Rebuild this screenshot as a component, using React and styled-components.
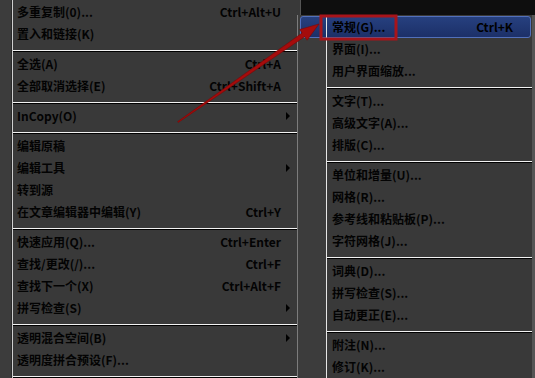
import React from 'react';
import styled, { createGlobalStyle } from 'styled-components';

const Global = createGlobalStyle`
  html, body { margin: 0; padding: 0; background: #0e0e0e; }
  body { font-family: "Noto Sans CJK SC", "Liberation Sans", sans-serif; }
`;

const Page = styled.div`
  position: relative;
  width: 535px;
  height: 378px;
  overflow: hidden;
  background: #0e0e0e;
`;

const MainMenu = styled.div`
  box-sizing: border-box;
  width: 301px;
  height: 378px;
  padding-top: 1px;
  border-right: 1px solid #555;
  background: linear-gradient(
    to right,
    #3c3c3c 0 11px,
    #2a2a2a 11px 12px,
    #cfcfcf 12px 13px,
    #393939 13px
  );
`;

const SubMenu = styled.div`
  position: absolute;
  left: 297px;
  top: 15px;
  box-sizing: border-box;
  width: 238px;
  height: 363px;
  overflow: hidden;
  padding-top: 1px;
  border-left: 1px solid #7c7c7c;
  border-right: 3px solid #555;
  background: linear-gradient(to right, #3c3c3c 0 28px, #393939 28px);

  &::after {
    content: '';
    position: absolute;
    left: 28px;
    top: 0;
    bottom: 0;
    width: 1px;
    background: #e6e6e6;
    z-index: 1;
  }
`;

const Row = styled.div`
  box-sizing: border-box;
  display: flex;
  align-items: center;
  height: 22px;
  padding-left: ${p => p.$indent}px;
  padding-right: ${p => p.$right}px;
  color: #030303;
  font-size: 12px;
  font-weight: 700;
  line-height: 22px;
  white-space: nowrap;
  ${p => p.$active && `
    margin: 0 1px 0 2px;
    padding-left: ${p.$indent - 3}px;
    padding-right: ${p.$right - 2}px;
    border: 1px solid #5270bb;
    border-radius: 3px;
    background: linear-gradient(#26407f, #1c3068);
    color: #000;
  `}
`;

const Label = styled.span`
  flex: 1;
`;

const Shortcut = styled.span`
  font-family: "Noto Sans CJK SC", "Liberation Sans", sans-serif;
`;

const ArrowSlot = styled.span`
  width: 15px;
  height: 22px;
  display: flex;
  align-items: center;
`;

const SubArrow = styled.span`
  margin-left: 5px;
  width: 0;
  height: 0;
  border-left: 4px solid #000;
  border-top: 4px solid transparent;
  border-bottom: 4px solid transparent;
`;

const Separator = styled.div`
  height: 8px;
  box-sizing: border-box;
  padding-top: 5px;
  margin-left: ${p => p.$offset}px;

  &::before {
    content: '';
    display: block;
    height: 1px;
    background: #f2f2f2;
    border-bottom: 1px solid #000;
  }
`;

const Overlay = styled.svg`
  position: absolute;
  left: 0;
  top: 0;
  width: 535px;
  height: 378px;
  pointer-events: none;
  z-index: 5;
`;

const mainItems = [
  { label: '多重复制(0)...', shortcut: 'Ctrl+Alt+U' },
  { label: '置入和链接(K)' },
  'sep',
  { label: '全选(A)', shortcut: 'Ctrl+A' },
  { label: '全部取消选择(E)', shortcut: 'Ctrl+Shift+A' },
  'sep',
  { label: 'InCopy(O)', sub: true },
  'sep',
  { label: '编辑原稿' },
  { label: '编辑工具', sub: true },
  { label: '转到源' },
  { label: '在文章编辑器中编辑(Y)', shortcut: 'Ctrl+Y' },
  'sep',
  { label: '快速应用(Q)...', shortcut: 'Ctrl+Enter' },
  { label: '查找/更改(/)...', shortcut: 'Ctrl+F' },
  { label: '查找下一个(X)', shortcut: 'Ctrl+Alt+F' },
  { label: '拼写检查(S)', sub: true },
  'sep',
  { label: '透明混合空间(B)', sub: true },
  { label: '透明度拼合预设(F)...' },
  'sep',
];

const subItems = [
  { label: '常规(G)...', shortcut: 'Ctrl+K', active: true },
  { label: '界面(I)...' },
  { label: '用户界面缩放...' },
  'sep',
  { label: '文字(T)...' },
  { label: '高级文字(A)...' },
  { label: '排版(C)...' },
  'sep',
  { label: '单位和增量(U)...' },
  { label: '网格(R)...' },
  { label: '参考线和粘贴板(P)...' },
  { label: '字符网格(J)...' },
  'sep',
  { label: '词典(D)...' },
  { label: '拼写检查(S)...' },
  { label: '自动更正(E)...' },
  'sep',
  { label: '附注(N)...' },
  { label: '修订(K)...' },
];

function Annotation() {
  const tail = [178, 122];
  const tip = [319, 24];
  const dx = tip[0] - tail[0];
  const dy = tip[1] - tail[1];
  const len = Math.hypot(dx, dy);
  const ux = dx / len, uy = dy / len;
  const px = -uy, py = ux;
  const headLen = 19;
  const base = [tip[0] - ux * headLen, tip[1] - uy * headLen];
  const shaftW = 2.2;
  const headW = 6.5;
  const pts = [
    [tail[0] + px * 0.5, tail[1] + py * 0.5],
    [base[0] + px * shaftW, base[1] + py * shaftW],
    [base[0] + px * headW, base[1] + py * headW],
    tip,
    [base[0] - px * headW, base[1] - py * headW],
    [base[0] - px * shaftW, base[1] - py * shaftW],
    [tail[0] - px * 0.5, tail[1] - py * 0.5],
  ].map(p => p.map(v => v.toFixed(1)).join(',')).join(' ');
  return (
    <Overlay viewBox="0 0 535 378">
      <rect x="321" y="16" width="75" height="23" fill="none" stroke="#a8141a" strokeWidth="3" />
      <polygon points={pts} fill="#a50c0c" stroke="#7a0606" strokeWidth="0.6" strokeLinejoin="round" />
    </Overlay>
  );
}

export default function App() {
  return (
    <Page>
      <Global />
      <MainMenu>
        {mainItems.map((it, i) =>
          it === 'sep' ? (
            <Separator key={i} $offset={13} />
          ) : (
            <Row key={i} $indent={17} $right={4}>
              <Label>{it.label}</Label>
              {it.shortcut && <Shortcut>{it.shortcut}</Shortcut>}
              <ArrowSlot>{it.sub && <SubArrow />}</ArrowSlot>
            </Row>
          )
        )}
      </MainMenu>
      <SubMenu>
        {subItems.map((it, i) =>
          it === 'sep' ? (
            <Separator key={i} $offset={29} />
          ) : (
            <Row key={i} $indent={34} $right={19} $active={it.active}>
              <Label>{it.label}</Label>
              {it.shortcut && <Shortcut>{it.shortcut}</Shortcut>}
            </Row>
          )
        )}
      </SubMenu>
      <Annotation />
    </Page>
  );
}
